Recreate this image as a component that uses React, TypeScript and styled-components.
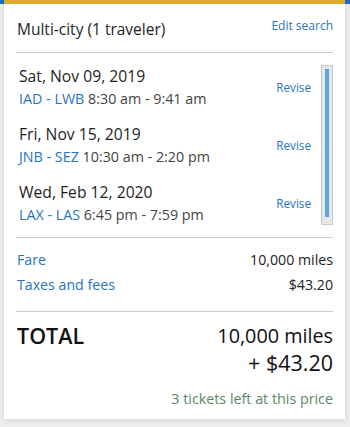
import styled, {createGlobalStyle} from "styled-components";

const GlobalStyle = createGlobalStyle`
    html, body {
        margin: 0;
        padding: 0;
    }

    body {
        background: #eeeeee;
        font-family: "Open Sans", "Liberation Sans", sans-serif;
    }
`

const StyledPage = styled.div`
    display: flex;

    padding: 0 5px 8px 4px;

    background: linear-gradient(#1b6ec2 0, #1b6ec2 4px, transparent 4px);
`

const StyledCard = styled.div`
    display: flex;

    flex-direction: column;

    width: 100%;

    padding: 0 12px 11px;

    border-top: 4px solid #ddaa2b;

    background: #ffffff;

    box-shadow: 0 1px 6px rgba(0, 0, 0, .12);

    box-sizing: border-box;
`

const StyledHeader = styled.div`
    display: flex;

    align-items: flex-start;
    justify-content: space-between;

    padding: 15px 0 13px 1px;

    border-bottom: 1px solid #cccccc;
`

const StyledTitle = styled.h1`
    margin: 0;

    font-size: 15.5px;
    font-weight: 400;
    line-height: 20px;

    color: #1e1e1e;
`

const StyledLink = styled.a<{ $size?: number }>`
    font-size: ${({$size}) => $size ?? 11.7}px;
    line-height: 16px;

    color: #2775c2;

    text-decoration: none;

    cursor: pointer;
`

const StyledEditLink = styled(StyledLink)`
    margin-top: -1px;
`

const StyledScrollArea = styled.div`
    display: flex;

    gap: 10px;

    height: 160px;

    margin-top: 12px;
`

const StyledTrips = styled.div`
    display: flex;

    flex-direction: column;

    flex: 1;

    gap: 16px;

    padding: 1px 0 0 3px;
`

const StyledTrip = styled.div`
    display: flex;

    align-items: center;
    justify-content: space-between;
`

const StyledTripInfo = styled.div`
    display: flex;

    flex-direction: column;

    gap: 4px;
`

const StyledDate = styled.div`
    font-size: 15.7px;
    line-height: 20px;

    color: #1e1e1e;
`

const StyledRoute = styled.div`
    font-size: 14.3px;
    line-height: 18px;

    color: #444444;
`

const StyledAirports = styled.span`
    color: #2775c2;
`

const StyledScrollTrack = styled.div`
    display: flex;

    width: 12px;

    padding: 3px 3px 7px;

    border: 1px solid #c9c9c9;

    background: #e7e7e7;

    box-sizing: border-box;
`

const StyledScrollThumb = styled.div`
    flex: 1;

    background: #5ba5e3;
`

const StyledDivider = styled.hr<{ $gap?: number }>`
    width: 100%;

    margin: ${({$gap}) => $gap ?? 0}px 0 0;

    border: none;
    border-top: 1px solid #cccccc;
`

const StyledFares = styled.div`
    display: flex;

    flex-direction: column;

    gap: 7px;

    padding: 13px 0 17px 1px;
`

const StyledFareRow = styled.div`
    display: flex;

    justify-content: space-between;

    font-size: 14.2px;
    line-height: 18px;
`

const StyledFareLabel = styled.span`
    color: #2775c2;
`

const StyledFareValue = styled.span`
    color: #222222;
`

const StyledTotal = styled.div`
    display: flex;

    justify-content: space-between;

    padding: 10px 0 0 1px;
`

const StyledTotalLabel = styled.span`
    font-size: 21.5px;
    font-weight: 600;
    line-height: 28px;

    color: #111111;
`

const StyledTotalAmount = styled.div`
    display: flex;

    flex-direction: column;

    align-items: flex-end;

    color: #111111;
`

const StyledMiles = styled.span`
    font-size: 19.8px;
    line-height: 27px;
`

const StyledCash = styled.span`
    font-size: 21.5px;
    line-height: 28px;
`

const StyledAvailability = styled.div`
    margin-top: 13px;

    font-size: 14.3px;
    line-height: 18px;

    text-align: right;

    color: #5b8a66;
`

type Trip = {
	date: string
	route: string
	time: string
}

const trips: Trip[] = [
	{date: "Sat, Nov 09, 2019", route: "IAD - LWB", time: "8:30 am - 9:41 am"},
	{date: "Fri, Nov 15, 2019", route: "JNB - SEZ", time: "10:30 am - 2:20 pm"},
	{date: "Wed, Feb 12, 2020", route: "LAX - LAS", time: "6:45 pm - 7:59 pm"},
]

export default function App() {
	return (
		<StyledPage>
			<GlobalStyle/>
			<StyledCard>
				<StyledHeader>
					<StyledTitle>Multi-city (1 traveler)</StyledTitle>
					<StyledEditLink $size={12}>Edit search</StyledEditLink>
				</StyledHeader>
				<StyledScrollArea>
					<StyledTrips>
						{trips.map(trip => (
							<StyledTrip key={trip.date}>
								<StyledTripInfo>
									<StyledDate>{trip.date}</StyledDate>
									<StyledRoute>
										<StyledAirports>{trip.route}</StyledAirports> {trip.time}
									</StyledRoute>
								</StyledTripInfo>
								<StyledLink>Revise</StyledLink>
							</StyledTrip>
						))}
					</StyledTrips>
					<StyledScrollTrack>
						<StyledScrollThumb/>
					</StyledScrollTrack>
				</StyledScrollArea>
				<StyledDivider $gap={12}/>
				<StyledFares>
					<StyledFareRow>
						<StyledFareLabel>Fare</StyledFareLabel>
						<StyledFareValue>10,000 miles</StyledFareValue>
					</StyledFareRow>
					<StyledFareRow>
						<StyledFareLabel>Taxes and fees</StyledFareLabel>
						<StyledFareValue>$43.20</StyledFareValue>
					</StyledFareRow>
				</StyledFares>
				<StyledDivider/>
				<StyledTotal>
					<StyledTotalLabel>TOTAL</StyledTotalLabel>
					<StyledTotalAmount>
						<StyledMiles>10,000 miles</StyledMiles>
						<StyledCash>+ $43.20</StyledCash>
					</StyledTotalAmount>
				</StyledTotal>
				<StyledAvailability>3 tickets left at this price</StyledAvailability>
			</StyledCard>
		</StyledPage>
	)
}
